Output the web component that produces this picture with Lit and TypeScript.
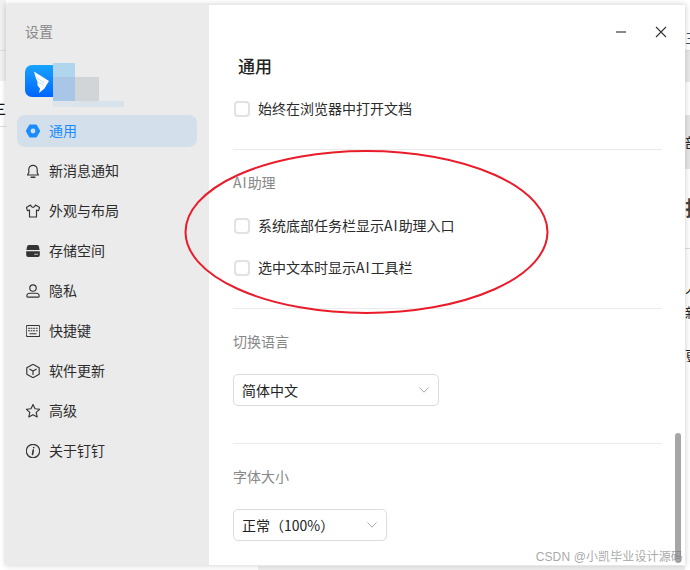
import { LitElement, html, css, svg } from "lit";
import { customElement } from "lit/decorators.js";

const I = (c: unknown) => html`<svg class="ic" viewBox="1 1 14 14" fill="none" stroke="#333" stroke-width="1.15" stroke-linejoin="round" stroke-linecap="round">${c}</svg>`;

const icons: Record<string, unknown> = {
  gear: html`<svg class="ic" viewBox="1 1 14 14"><path fill-rule="evenodd" fill="#1a8cff" d="M5 1.600h6a1 1 0 0 1 .85.5l3 5.200a1.300 1.300 0 0 1 0 1.400l-3 5.200a1 1 0 0 1-.85.5H5a1 1 0 0 1-.85-.5l-3-5.200a1.300 1.300 0 0 1 0-1.400l3-5.200A1 1 0 0 1 5 1.600ZM8 5.600a2.400 2.400 0 1 0 0 4.800 2.400 2.400 0 0 0 0-4.800Z"/></svg>`,
  bell: I(svg`<path d="M2.500 12h11l-1.300-2.200V6.500a4.200 4.200 0 0 0-8.400 0v3.300Z"/><path d="M6.300 14.300h3.400" stroke-width="1.600"/>`),
  shirt: I(svg`<path d="M5.500 2 1.300 4.500l1.300 3.200 1.900-.7v7h7V7l1.900.7 1.300-3.200L10.500 2c-.5 1.600-1.500 2.300-2.500 2.300S6 3.600 5.500 2Z"/>`),
  disk: html`<svg class="ic" viewBox="1 1 14 14"><path fill="#333" d="M4 2h8a2 2 0 0 1 2 1.800l.6 3.200H1.400L2 3.800A2 2 0 0 1 4 2ZM1.200 8.200h13.600V12a2 2 0 0 1-2 2H3.200a2 2 0 0 1-2-2Z"/><path fill="#ebebeb" d="M9.500 10.800h1.200V12H9.500zM11.500 10.800h1.200V12h-1.200z"/></svg>`,
  user: I(svg`<circle cx="8" cy="5" r="3.200"/><path d="M1.800 13.200c0-2 1.500-3 3.200-3h6c1.700 0 3.200 1 3.200 3 0 .6-.3.9-.8.9H2.600c-.5 0-.8-.3-.8-.9Z"/>`),
  keys: I(svg`<rect x="1.200" y="2.500" width="13.600" height="11" rx="1.500"/><path d="M3.500 5.300h1M6 5.300h1M8.500 5.300h1M11.200 5.300h1M3.500 7.800h1M6 7.800h1M8.500 7.800h1M11.200 7.800h1M5 10.800h6" stroke-width="1.100"/>`),
  box: I(svg`<path d="M8 1.300 14.200 4.700v6.600L8 14.700l-6.200-3.400V4.700Z"/><path d="M4.800 6.200 8 8l3.200-1.800M8 8v3.500"/>`),
  star: I(svg`<path d="M8 1.500l2 4.200 4.600.6-3.400 3.100 1 4.600L8 11.700 3.800 14l1-4.600L1.400 6.300 6 5.700Z"/>`),
  info: I(svg`<circle cx="8" cy="8" r="6.700"/><path d="M8.700 4.500v.3M8.300 7 7.500 11.500" stroke-width="1.600"/>`),
};

const nav: [string, string][] = [
  ["gear", "通用"], ["bell", "新消息通知"], ["shirt", "外观与布局"], ["disk", "存储空间"],
  ["user", "隐私"], ["keys", "快捷键"], ["box", "软件更新"], ["star", "高级"], ["info", "关于钉钉"],
];

@customElement("app-root")
export class AppRoot extends LitElement {
  static styles = css`
    :host { display: block; position: relative; width: 690px; height: 570px; overflow: hidden; background: #fff;
      font-family: "Noto Sans CJK SC", "Liberation Sans", sans-serif; font-size: 14px; color: #2b2b2b; }
    * { box-sizing: border-box; }
    .frag { position: absolute; }
    .txt { position: absolute; left: 685px; width: 5px; font-size: 14px; line-height: 14px; height: 14px; overflow: hidden; color: #222; }
    .stage { position: absolute; inset: 0; padding: 5px 5px 5px 6px; }
    .win { display: flex; height: 560px; background: #fff; box-shadow: 0 0 5px 1px rgba(0,0,0,.16); position: relative; }
    .side { width: 203px; flex: none; background: #ebebeb; padding: 16px 12px 0 11px; display: flex; flex-direction: column; }
    .side-title { color: #888; line-height: 20px; padding-left: 8px; }
    .logo-row { height: 37px; margin: 22px 0 0 8px; position: relative; flex: none; }
    .logo { width: 29px; height: 32px; display: block; position: absolute; left: 0; top: 2px; }
    .nav { display: flex; flex-direction: column; gap: 8px; margin-top: 15px; }
    .item { height: 32px; border-radius: 8px; display: flex; align-items: center; gap: 9px; padding-left: 9px; line-height: 20px; }
    .item span { padding-bottom: 2px; }
    .item.on { background: #d3e0eb; color: #1a8cff; }
    .ic { width: 14px; height: 14px; flex: none; display: block; }
    .main { flex: 1; min-width: 0; padding: 0 23px 0 24px; overflow: hidden; position: relative; }
    .bar { height: 52px; display: flex; justify-content: flex-end; align-items: center; gap: 28px; margin-right: -23px; padding: 2px 18px 0 0; }
    .head { font-size: 17px; font-weight: 500; color: #222; line-height: 20px; padding-left: 5px; margin-top: -1px; }
    .check { display: flex; align-items: center; gap: 8px; height: 20px; padding-left: 1px; }
    .check .t { padding-bottom: 2px; }
    .box { width: 16px; height: 16px; border: 2px solid #e2e2e2; border-radius: 4px; background: #fff; flex: none; }
    .rule { height: 1px; background: #ebebeb; flex: none; }
    .label { color: #888; line-height: 20px; }
    .sel { display: flex; align-items: center; justify-content: space-between; height: 32px; border: 1px solid #dcdcdc; border-radius: 5px; padding: 0 9px 0 8px; color: #222; }
    .stack { display: flex; flex-direction: column; }
    .ai { letter-spacing: 1px; }
    .ellipse { position: absolute; left: 0; top: 0; pointer-events: none; }
    .thumb { position: absolute; left: 675px; top: 433px; width: 6px; height: 130px; border-radius: 3px; background: #a6a6a6; }
    .mark { position: absolute; right: 7px; top: 549px; font-size: 12px; line-height: 16px; letter-spacing: .13px; color: rgba(110,110,110,.62); white-space: nowrap; font-family: "Liberation Sans", "Noto Sans CJK SC", sans-serif; }
    .m { position: absolute; }
  `;

  render() {
    return html`
      <div class="frag" style="left:0;top:0;width:6px;height:50px;background:#f1f1f1"></div>
      <div class="frag" style="left:0;top:50px;width:6px;height:1px;background:#ddd"></div>
      <div class="frag" style="left:0;top:51px;width:6px;height:30px;background:#f1f1f1"></div>
      <div class="frag" style="left:0;top:126px;width:6px;height:1px;background:#ddd"></div>
      <div class="frag" style="left:0;top:101px;width:6px;height:14px;font-size:14px;font-weight:500;line-height:14px;color:#111;overflow:hidden;direction:rtl">三</div>
      <div class="frag" style="left:685px;top:50px;width:5px;height:1px;background:#ddd"></div>
      <div class="frag" style="left:685px;top:51px;width:5px;height:31px;background:#e9e9e9"></div>
      <div class="frag" style="left:685px;top:115px;width:5px;height:54px;background:#e6e6e6"></div>
      <div class="frag" style="left:685px;top:248px;width:5px;height:1px;background:#ddd"></div>
      <div class="txt" style="top:9px;color:#555;direction:rtl;height:12px;line-height:12px;font-size:12px">⋮</div>
      <div class="txt" style="top:30px;color:#456">三</div>
      <div class="txt" style="top:135px">部</div>
      <div class="txt" style="top:197px;height:22px;font-size:20px;line-height:22px;font-weight:700;color:#444">拉</div>
      <div class="txt" style="top:280px">人</div>
      <div class="txt" style="top:305px">新</div>
      <div class="txt" style="top:348px">更</div>
      <div class="frag" style="left:258px;top:566px;width:427px;height:4px;background:#eeeeee"></div>

      <div class="stage">
        <div class="win">
          <aside class="side">
            <div class="side-title">设置</div>
            <div class="logo-row">
              <svg class="logo" viewBox="0 0 29 32">
                <defs><linearGradient id="lg" x1="0" y1="0" x2="0" y2="1"><stop offset="0" stop-color="#18a4ff"/><stop offset="1" stop-color="#0065ff"/></linearGradient></defs>
                <path d="M7 0h22v32H7a7 7 0 0 1-7-7V7a7 7 0 0 1 7-7Z" fill="url(#lg)"/>
                <path d="M9 6.500 24 16 21.500 20 19.500 23.500 14 28 15 23.500 12.500 20.500 12.500 17 10.500 12Z" fill="#fff"/>
                <path d="M11.500 12.500 19 18M13 17l6 3.500" stroke="#8ccaff" stroke-width=".6" fill="none"/>
              </svg>
              <div class="m" style="left:28px;top:0;width:22px;height:14px;background:#b0d6ee"></div>
              <div class="m" style="left:28px;top:14px;width:22px;height:24px;background:#a9c6e6"></div>
              <div class="m" style="left:50px;top:14px;width:24px;height:24px;background:#d2d5d8"></div>
              <div class="m" style="left:28px;top:38px;width:22px;height:6px;background:#dde4ea"></div>
              <div class="m" style="left:50px;top:38px;width:49px;height:6px;background:#d9e3ec"></div>
            </div>
            <nav class="nav">
              ${nav.map(([ic, t], i) => html`<div class="item ${i === 0 ? "on" : ""}">${icons[ic]}<span>${t}</span></div>`)}
            </nav>
          </aside>
          <main class="main">
            <div class="bar">
              <svg width="12" height="12" viewBox="0 0 12 12"><path d="M1 6h10" stroke="#555" stroke-width="1.400"/></svg>
              <svg width="12" height="12" viewBox="0 0 12 12"><path d="M1 1l10 10M11 1 1 11" stroke="#333" stroke-width="1.100"/></svg>
            </div>
            <div class="stack">
              <div class="head">通用</div>
              <div class="check" style="margin-top:23px"><span class="box"></span><span class="t">始终在浏览器中打开文档</span></div>
              <div class="rule" style="margin-top:30px"></div>
              <div class="label" style="margin-top:22px">${this.ai()}助理</div>
              <div class="check" style="margin-top:24px"><span class="box"></span><span class="t">系统底部任务栏显示${this.ai()}助理入口</span></div>
              <div class="check" style="margin-top:22px"><span class="box"></span><span class="t">选中文本时显示${this.ai()}工具栏</span></div>
              <div class="rule" style="margin-top:30px"></div>
              <div class="label" style="margin-top:22px">切换语言</div>
              <div class="sel" style="margin-top:23px;width:206px"><span>简体中文</span>${this.chev()}</div>
              <div class="rule" style="margin-top:37px"></div>
              <div class="label" style="margin-top:22px">字体大小</div>
              <div class="sel" style="margin-top:23px;width:154px"><span>正常（100%）</span>${this.chev()}</div>
            </div>
          </main>
        </div>
      </div>

      <svg class="ellipse" width="690" height="570"><ellipse cx="366.500" cy="232" rx="181" ry="81" fill="none" stroke="#ea1c2a" stroke-width="2"/></svg>
      <div class="thumb"></div>
      <div class="mark">CSDN @小凯毕业设计源码</div>
    `;
  }

  ai() {
    return html`<span class="ai">AI</span>`;
  }

  chev() {
    return html`<svg width="10" height="6" viewBox="0 0 10 6"><path d="M.5.5 5 5.200 9.500.5" fill="none" stroke="#aaa" stroke-width="1"/></svg>`;
  }
}
